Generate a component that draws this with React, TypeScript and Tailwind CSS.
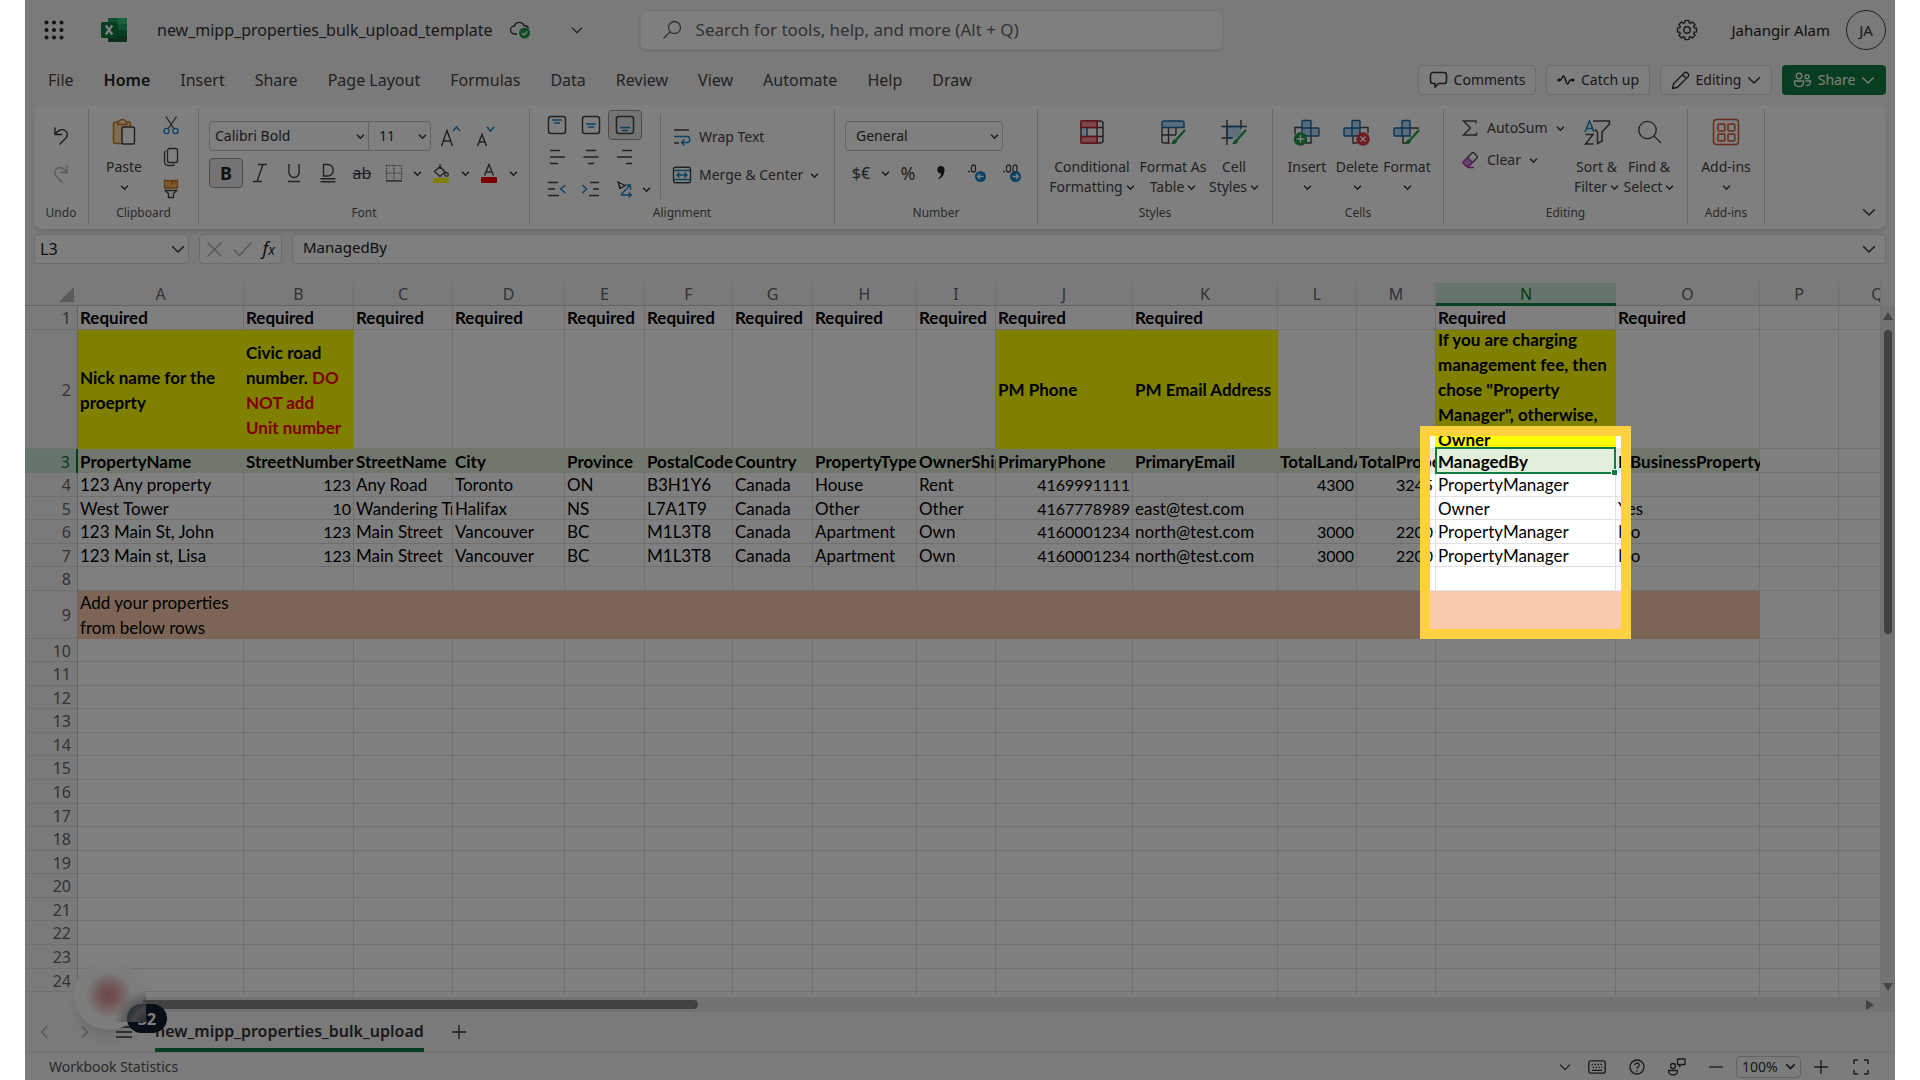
import React from "react";

type Kids = { children?: React.ReactNode };
type SvgProps = Kids & { w?: number; h?: number; box?: string; stroke?: string; sw?: number };

function Svg({ w = 24, h = 24, box, stroke = "#444", sw = 1.3, children }: SvgProps) {
  return (
    <svg width={w} height={h} viewBox={box ?? `0 0 ${w} ${h}`} fill="none" stroke={stroke} strokeWidth={sw} className="shrink-0" aria-hidden="true">
      {children}
    </svg>
  );
}

const BLUE = "#1684c8";
const GREEN = "#219a4b";

const Chev = ({ s = 9 }: { s?: number }) => (
  <Svg w={s} h={s} box="0 0 8 8" stroke="#333" sw={1.3}><path d="M1 2.5 4 5.5 7 2.5" /></Svg>
);
const BigChev = ({ color = "#333", w = 14 }: { color?: string; w?: number }) => (
  <Svg w={w} h={w} box="0 0 14 14" stroke={color} sw={1.4}><path d="M1.2 4.2 7 10 12.8 4.2" /></Svg>
);

/* ---------- icons ---------- */
const Waffle = () => (
  <svg width="20" height="20" viewBox="0 0 20 20" fill="#222" aria-hidden="true">
    {[2.5, 10, 17.5].map((y) => [2.5, 10, 17.5].map((x) => <circle key={`${x}-${y}`} cx={x} cy={y} r="2" />))}
  </svg>
);
const ExcelLogo = () => (
  <svg width="26" height="24" viewBox="0 0 26 24" aria-hidden="true">
    <rect x="7" y="0" width="19" height="24" rx="1.5" fill="#185c37" />
    <path d="M8.500 0H16.500V6H7V1.500A1.500 1.500 0 0 1 8.500 0Z" fill="#21a366" />
    <path d="M16.500 0H24.500A1.500 1.500 0 0 1 26 1.500V6H16.500Z" fill="#33c481" />
    <rect x="16.500" y="6" width="9.500" height="6" fill="#21a366" />
    <rect x="16.500" y="12" width="9.500" height="6" fill="#107c41" />
    <rect x="7" y="6" width="9.500" height="6" fill="#107c41" />
    <rect x="0" y="4" width="16" height="16" rx="1.500" fill="#107c41" />
    <path d="M4.800 7.500 11.200 16.500M11.200 7.500 4.800 16.500" stroke="#fff" strokeWidth="2.200" />
  </svg>
);
const Cloud = () => (
  <Svg w={22} h={22} stroke="#333">
    <path d="M8 15H5.500a4 4 0 0 1 0-8A5 5 0 0 1 15 6.500c2.500 0 4 1.300 4.500 3" />
    <circle cx="15.500" cy="14" r="5.500" fill={GREEN} stroke="none" />
    <path d="m13 14 2 2 3.300-3.600" stroke="#fff" />
  </Svg>
);
const SearchIco = () => (
  <Svg w={20} h={20} stroke="#666"><circle cx="12.500" cy="7.500" r="6" /><path d="M8 12 1.500 18.500" /></Svg>
);
const GEAR_TEETH = Array.from({ length: 8 }, (_, i) => {
  const p = (deg: number, r: number) => {
    const a = ((i * 45 + deg) * Math.PI) / 180;
    return `${(11 + r * Math.cos(a)).toFixed(2)} ${(11 + r * Math.sin(a)).toFixed(2)}`;
  };
  return `${i === 0 ? "M" : "L"}${p(-13, 9.6)}A9.600 9.600 0 0 1 ${p(13, 9.6)}L${p(16, 7.6)}A8 8 0 0 1 ${p(29, 7.6)}`;
}).join("") + "Z";
const Gear = () => (
  <Svg w={22} h={22} stroke="#333" sw={1.4}>
    <circle cx="11" cy="11" r="3.200" />
    <path d={GEAR_TEETH} strokeLinejoin="round" />
  </Svg>
);
const CommentIco = () => (
  <Svg w={19} h={18} stroke="#333" sw={1.5}><path d="M4 1.500h11A2.500 2.500 0 0 1 17.500 4v6a2.500 2.500 0 0 1-2.500 2.500H9.500L6 16.200V12.500H4A2.500 2.500 0 0 1 1.500 10V4A2.500 2.500 0 0 1 4 1.500Z" strokeLinejoin="round" /></Svg>
);
const CatchIco = () => (
  <Svg w={18} h={12} stroke="#222" sw={1.4}><circle cx="2" cy="6" r="1.600" fill="#222" stroke="none" /><circle cx="16" cy="6" r="1.600" fill="#222" stroke="none" /><path d="M2 6h1.500c1.500 0 1.500-4 3-4s2.500 8 4 8 1.500-4 3-4H16" /></Svg>
);
const PencilIco = () => (
  <Svg w={19} h={19} stroke="#333" sw={1.4}><path d="m1.500 17.500 1.200-5L13.200 2a2.300 2.300 0 0 1 3.300 0l.5.500a2.300 2.300 0 0 1 0 3.300L6.500 16.300ZM11.500 3.700l3.800 3.800" strokeLinejoin="round" /></Svg>
);
const ShareIco = () => (
  <Svg w={19} h={16} stroke="#fff" sw={1.3}><circle cx="6" cy="4" r="2.800" /><circle cx="14" cy="4.800" r="2" /><path d="M1.500 9h9v1.500c0 5.500-9 5.500-9 0ZM12.500 9h5v1c0 3-2.500 3.800-4.800 3" /></Svg>
);
const UndoIco = () => (
  <Svg w={18} h={20} stroke="#333" sw={1.4}><path d="M3 1.500v7h7M3.300 8.200C6 4 10 2.500 13 4.500c3 2 3 5.500.5 8L7.500 18.500" /></Svg>
);
const RedoIco = () => (
  <Svg w={18} h={20} stroke="#b0b0b0" sw={1.4}><path d="M15 1.500v7H8M14.700 8.200C12 4 8 2.500 5 4.500c-3 2-3 5.500-.5 8l6 6" /></Svg>
);
const PasteIco = () => (
  <Svg w={24} h={28} stroke="#c67a22" sw={1.5}>
    <path d="M4 4h14v21H1.500V5.500A1.500 1.500 0 0 1 3 4Z" fill="#fbd9a0" stroke="none" />
    <path d="M10 25.500H3A1.500 1.500 0 0 1 1.500 24V5.500A1.500 1.500 0 0 1 3 4h2.500M14.500 4H17a1.500 1.500 0 0 1 1.500 1.500V8M6 6.500h8.500V3.500c-1.500 0-1.500-2-4.200-2S8 3.500 6 3.500Z" />
    <rect x="10" y="9" width="12.500" height="17" rx="1.500" fill="#fff" stroke="#444" />
  </Svg>
);
const CutIco = () => (
  <Svg w={18} h={20}><path d="M4 1.500 12 14M14.500 1.500 6 14" /><circle cx="4.500" cy="16" r="2.600" stroke={BLUE} /><circle cx="13.500" cy="16" r="2.600" stroke={BLUE} /></Svg>
);
const CopyIco = () => (
  <Svg w={16} h={20}><rect x="4.500" y="1.500" width="10" height="14" rx="2" /><path d="M2.500 4C1.500 4.500 1.500 5 1.500 6v8c0 3 1.500 4.500 4 4.500H9c1.500 0 2-.3 2.500-1" /></Svg>
);
const PainterIco = () => (
  <Svg w={16} h={20}><path d="M1.500 1.500h13V9h-13Z" fill="#f8b25a" stroke="#c67a22" /><path d="M9 1.500v4M12 1.500v3" stroke="#c67a22" /><path d="M2 11.500h12l-3.500 3v4h-5v-4Z" strokeLinejoin="round" /></Svg>
);
const GrowA = ({ down }: { down?: boolean }) => (
  <Svg w={22} h={24} sw={1.5}>
    {down ? <path d="M2.500 22 7 10.500 11.500 22M4 18h6" /> : <path d="M1.500 22 7 6.500 12.500 22M3.500 17h7" />}
    <path d={down ? "m12 3 3.500 4L19 3" : "m13 7 3.500-4L20 7"} stroke={BLUE} />
  </Svg>
);
const BorderIco = () => (
  <Svg w={18} h={18} stroke="#555" sw={1.2}><path d="M1.500 1.500h15M1.500 9h15M1.500 1.500V15M9 1.500V15M16.500 1.500V15" strokeDasharray="1.200 1.300" /><path d="M1 16.800h16" stroke="#333" /></Svg>
);
const FillIco = () => (
  <Svg w={18} h={20}><rect x="1" y="15" width="16" height="5" rx="1" fill="#ffff00" stroke="none" /><path d="m8 3.500 5 5.500-5 4.500-5.500-5ZM8 1v5" strokeLinejoin="round" /><circle cx="14.500" cy="11.500" r="1.800" /></Svg>
);
const FontColorIco = () => (
  <Svg w={18} h={20} sw={1.4}><rect x="1" y="14" width="16" height="6" rx="1" fill="#f00" stroke="none" /><path d="M4.500 12.500 9 1.500l4.500 11M6 9h6" /></Svg>
);
const VAlign = ({ y }: { y: number }) => (
  <Svg w={20} h={20} sw={1.5}><rect x="1.500" y="1.500" width="17" height="17" rx="2.500" /><path d={`M5 ${y}h10M7 ${y + 3}h6`} stroke={BLUE} /></Svg>
);
const HAlign = ({ d }: { d: string }) => <Svg w={18} h={16} sw={1.4}><path d={d} /></Svg>;
const Indent = ({ right }: { right?: boolean }) => (
  <Svg w={20} h={16} sw={1.4}>
    <path d={right ? "M9 1.500h9M12 8h6M8 14.500h10" : "M1 1.500h10M1 8h7M1 14.500h11"} />
    <path d={right ? "m1.500 4 4 4-4 4" : "m18.500 4-5 4 5 4"} stroke={BLUE} />
  </Svg>
);
const OrientIco = () => (
  <Svg w={20} h={18} stroke={BLUE}><path d="m3 2 7 3.500-5 3ZM5.500 9 3 2" stroke="#333" /><path d="m6 14.500 9-9M10.500 5h5v5M6 15h10M13.500 12.500 16.500 15l-3 2.500" /></Svg>
);
const WrapIco = () => (
  <Svg w={20} h={18} sw={1.4}><path d="M2 2h15M2 15h5" /><path d="M2 8.500h13.500c3 0 3 6 0 6H10M12.500 11.500 9.500 14.500l3 3" stroke={BLUE} /></Svg>
);
const MergeIco = () => (
  <Svg w={20} h={18} sw={1.4}><rect x="1.500" y="1.200" width="17" height="15.600" rx="2" /><path d="M2 4.500h16M2 13.500h16M5 9h10M7.500 6.500 5 9l2.500 2.500M12.500 6.500 15 9l-2.500 2.500" stroke={BLUE} /></Svg>
);
const DecIco = ({ two }: { two?: boolean }) => (
  <Svg w={20} h={20} sw={1.3}>
    <circle cx="2" cy="8.500" r="1" fill="#444" stroke="none" />
    <rect x="4.500" y="2" width="4" height="7" rx="2" />
    {two && <rect x="11" y="2" width="4" height="7" rx="2" />}
    <circle cx="13.500" cy="13.500" r="5.500" fill={BLUE} stroke="none" />
    <path d={two ? "M10.500 13.500h6M14 11l2.500 2.500L14 16" : "M16.500 13.500h-6M13 11l-2.500 2.500L13 16"} stroke="#fff" />
  </Svg>
);
const CondIco = () => (
  <Svg w={26} h={28} sw={1.5}><rect x="2" y="3" width="22" height="22" rx="2.500" /><path d="M2 9.500h22M2 18.500h22M18 3v22" /><path d="M3 9.500h4v9H3Z" fill="#d6eafc" stroke="none" /><path d="M8 9.500v9" stroke="#1769aa" /><rect x="2" y="3" width="16" height="6.500" fill="#f49191" stroke="#c4262e" /><rect x="2" y="18.500" width="16" height="6.500" fill="#f49191" stroke="#c4262e" /></Svg>
);
const Brush = () => (
  <><path d="M26 12 17 22" stroke={GREEN} strokeWidth="2.200" /><path d="M11.500 26c2.500-.3 1.500-4.500 4.300-4.700 3 0 3 4.700-1 4.700Z" fill={GREEN} stroke="none" /></>
);
const TableIco = () => (
  <Svg w={28} h={28} sw={1.4}><path d="M3 9.500V23a2 2 0 0 0 2 2h6M3 17h14M9.500 9.500V25M17 9.500v7" /><path d="M3 9.500V5a2 2 0 0 1 2-2h18a2 2 0 0 1 2 2v4.500Z" fill="#b5d9f5" stroke="#1769aa" /><Brush /></Svg>
);
const CellIco = () => (
  <Svg w={28} h={28} sw={1.4}><rect x="7" y="8.500" width="14" height="11" fill="#c3e0f8" stroke="none" /><path d="M7 2v25M21 2v8M1.500 8.500H27M1.500 20H13" /><path d="M7 8.500h14V11M7 8.500V20h6" stroke="#1769aa" /><Brush /></Svg>
);
const InsertIco = () => (
  <Svg w={28} h={28} sw={1.4}><path d="M2 16v-6.500h8M18 18v7h-6" /><path d="M10 2.500h7a1 1 0 0 1 1 1v6.500h7a1 1 0 0 1 1 1v6a1 1 0 0 1-1 1H10a1 1 0 0 1-1-1V3.500a1 1 0 0 1 1-1ZM9 10h9v8" fill="#b5d9f5" stroke="#1769aa" /><circle cx="7.500" cy="21" r="6.800" fill={GREEN} stroke="none" /><path d="M7.500 17.300v7.400M3.800 21h7.400" stroke="#fff" /></Svg>
);
const DeleteIco = () => (
  <Svg w={28} h={28} sw={1.4}><path d="M17 9.500h8V15M10 18v7h4" /><path d="M10 2.500h6a1 1 0 0 1 1 1V18H2a1 1 0 0 1-1-1v-6a1 1 0 0 1 1-1h7V3.500a1 1 0 0 1 1-1ZM9 10h8M9 10v8" fill="#b5d9f5" stroke="#1769aa" /><circle cx="20" cy="21" r="6.800" fill="#dc3a41" stroke="none" /><path d="m17.500 18.500 5 5M22.500 18.500l-5 5" stroke="#fff" /></Svg>
);
const FormatIco = () => (
  <Svg w={28} h={28} sw={1.4}><path d="M17 10h9M10 18v7h4" /><path d="M10 2.500h6a1 1 0 0 1 1 1V18H2a1 1 0 0 1-1-1v-6a1 1 0 0 1 1-1h7V3.500a1 1 0 0 1 1-1ZM9 10h8M9 10v8" fill="#b5d9f5" stroke="#1769aa" /><Brush /></Svg>
);
const SigmaIco = () => <Svg w={18} h={18} sw={1.4}><path d="M15 4.500V2H2.500l7 7-7 7H15.500v-2.500" /></Svg>;
const EraserIco = () => (
  <Svg w={18} h={18} sw={1.3}><path d="m6.500 6.500 4.500-4.500a1.500 1.500 0 0 1 2 0l3 3a1.500 1.500 0 0 1 0 2L11.500 11.500" /><path d="m6.500 6.500 5 5-3.500 3.500H5L2 12a1.500 1.500 0 0 1 0-1Z" fill="#d48bdd" stroke="#a22db0" /><path d="M6 16.500h7" stroke="#a22db0" /></Svg>
);
const SortIco = () => (
  <Svg w={28} h={28} sw={1.5}><path d="M2 14 6.500 3 11 14M3.500 10.500h6" stroke={BLUE} /><path d="M2.500 16.500H10L2.500 26H10.500M10 3h16.500v3L19 14v9l-4.500 2.500V14L12 11.500" /></Svg>
);
const FindIco = () => <Svg w={26} h={28}><circle cx="11.500" cy="12" r="8.700" /><path d="m18 18 7 7" /></Svg>;
const AddinIco = () => (
  <Svg w={28} h={28} stroke="#d2562f" sw={1.5}><rect x="1.500" y="1.500" width="25" height="25" rx="3" />{[6, 16].map((x) => [6, 16].map((y) => <rect key={`${x}${y}`} x={x} y={y} width="6.800" height="7" rx="1" />))}</Svg>
);

/* ---------- ribbon parts ---------- */
function IconBtn({ label, className = "w-[34px]", active, children }: Kids & { label: string; className?: string; active?: boolean }) {
  return (
    <button type="button" aria-label={label} className={`flex h-[30px] shrink-0 items-center justify-center rounded ${active ? "border border-[#999] bg-[#e8e8e8]" : ""} ${className}`}>
      {children}
    </button>
  );
}
function Group({ label, className, children }: Kids & { label: string; className: string }) {
  return (
    <section className={`h-[115px] shrink-0 border-r border-[#d1d1d1] ${className}`}>
      <div className="flex h-24">{children}</div>
      <h2 className="text-center text-xs leading-4 text-[#555]">{label}</h2>
    </section>
  );
}
function TallBtn({ icon, line1, line2, className }: { icon: React.ReactNode; line1: string; line2?: string; className: string }) {
  return (
    <button type="button" className={`flex shrink-0 flex-col items-center pt-[9px] text-sm leading-5 whitespace-nowrap text-[#444] ${className}`}>
      {icon}
      <span className="mt-[11px]">{line1}</span>
      <span className="flex h-5 items-center gap-[3px]">{line2}<Chev /></span>
    </button>
  );
}
function Picker({ label, value, className }: { label: string; value: string; className: string }) {
  return (
    <div className={`relative h-full ${className}`}>
      <select aria-label={label} defaultValue={value} className="h-full w-full appearance-none bg-transparent text-sm text-[#333] outline-none">
        <option>{value}</option>
      </select>
      <span className="pointer-events-none absolute top-0 right-[3px] flex h-full items-center"><Chev /></span>
    </div>
  );
}

const menu = ["File", "Home", "Insert", "Share", "Page Layout", "Formulas", "Data", "Review", "View", "Automate", "Help", "Draw"];

function TopBar() {
  return (
    <header>
      <div className="flex h-[60px] items-center pr-[9px] pl-[19px]">
        <button type="button" aria-label="App launcher"><Waffle /></button>
        <span className="ml-[37px]"><ExcelLogo /></span>
        <h1 className="ml-[30px] text-base whitespace-nowrap text-[#333]">new_mipp_properties_bulk_upload_template</h1>
        <button type="button" aria-label="Saved to cloud" className="ml-4"><Cloud /></button>
        <button type="button" aria-label="File details" className="mr-[57px] ml-[40px]"><BigChev w={12} /></button>
        <label className="flex h-10 w-[583px] items-center rounded-md border border-[#ececec] bg-white pl-[21px] shadow-sm">
          <SearchIco />
          <input type="search" aria-label="Search" placeholder="Search for tools, help, and more (Alt + Q)" className="ml-3.5 flex-1 bg-transparent text-[17px] outline-none placeholder:text-[#666]" />
        </label>
        <div className="ml-auto flex items-center">
          <button type="button" aria-label="Settings"><Gear /></button>
          <span className="ml-[33px] text-[15px] text-[#222]">Jahangir Alam</span>
          <button type="button" aria-label="Account" className="ml-4 size-10 rounded-full border border-[#444] text-[15px] text-[#333]">JA</button>
        </div>
      </div>
      <div className="flex h-10 items-center pr-[9px] pl-[23px]">
        <nav className="flex gap-[30px]">
          {menu.map((m) => (
            <button type="button" key={m} className={m === "Home" ? "text-base font-semibold whitespace-nowrap text-[#222]" : "text-base whitespace-nowrap text-[#444]"}>{m}</button>
          ))}
        </nav>
        <div className="ml-auto flex gap-2.5 text-sm text-[#333]">
          <button type="button" className="flex h-[30px] w-[118px] items-center justify-center gap-1.5 rounded border border-[#d6d6d6] bg-[#fcfcfc]"><CommentIco />Comments</button>
          <button type="button" className="flex h-[30px] w-[104px] items-center justify-center gap-1.5 rounded border border-[#d6d6d6] bg-[#fcfcfc]"><CatchIco />Catch up</button>
          <button type="button" className="flex h-[30px] w-[112px] items-center justify-center gap-1.5 rounded border border-[#d6d6d6] bg-[#fcfcfc]"><PencilIco />Editing<BigChev /></button>
          <button type="button" className="flex h-[30px] w-[104px] items-center justify-center gap-1.5 rounded bg-[#107c41] text-white"><ShareIco />Share<BigChev color="#fff" /></button>
        </div>
      </div>
    </header>
  );
}

function Ribbon() {
  return (
    <div className="mx-[9px] mt-[5px] flex h-[124px] overflow-hidden rounded-lg bg-white pt-1 shadow-md">
      <Group label="Undo" className="w-[55px]">
        <div className="flex w-full flex-col items-center pt-2">
          <button type="button" aria-label="Undo" className="flex h-[38px] items-center"><UndoIco /></button>
          <button type="button" aria-label="Redo" className="flex h-[38px] items-center"><RedoIco /></button>
        </div>
      </Group>
      <Group label="Clipboard" className="w-[110px]">
        <TallBtn icon={<PasteIco />} line1="Paste" className="ml-2.5 w-[50px]" />
        <div className="ml-1.5 flex flex-col items-center *:flex *:h-8 *:w-8 *:items-center *:justify-center">
          <button type="button" aria-label="Cut"><CutIco /></button>
          <button type="button" aria-label="Copy"><CopyIco /></button>
          <button type="button" aria-label="Format painter"><PainterIco /></button>
        </div>
      </Group>
      <Group label="Font" className="w-[331px]">
        <div className="flex flex-col gap-[7px] pt-3 pl-2.5">
          <div className="flex">
            <div className="flex h-[30px] w-[222px] rounded border border-[#c8c8c8]">
              <Picker label="Font name" value="Calibri Bold" className="w-[158px] pl-[5px]" />
              <Picker label="Font size" value="11" className="flex-1 border-l border-[#c8c8c8] pl-2.5" />
            </div>
            <IconBtn label="Increase font size" className="ml-0.5 w-[35px]"><GrowA /></IconBtn>
            <IconBtn label="Decrease font size" className="w-[35px]"><GrowA down /></IconBtn>
          </div>
          <div className="flex items-center">
            <IconBtn label="Bold" active><span className="text-lg font-bold text-[#222]">B</span></IconBtn>
            <IconBtn label="Italic"><Svg w={16} h={20} sw={1.4}><path d="M6 1.500h9M1 18.500h9M11 1.500 5 18.500" /></Svg></IconBtn>
            <IconBtn label="Underline"><Svg w={16} h={20} sw={1.4}><path d="M3 1v8.500a5 5 0 0 0 10 0V1M2 18.500h12" /></Svg></IconBtn>
            <IconBtn label="Double underline"><Svg w={16} h={20} sw={1.4}><path d="M3.500 1.500h4c7.500 0 7.500 11.500 0 11.500h-4ZM.5 15.800h15M.5 18.800h15" /></Svg></IconBtn>
            <IconBtn label="Strikethrough"><span className="text-base text-[#444] line-through">ab</span></IconBtn>
            <IconBtn label="Borders" className="w-[30px]"><BorderIco /></IconBtn>
            <IconBtn label="Border options" className="w-4"><Chev /></IconBtn>
            <IconBtn label="Fill color" className="w-8"><FillIco /></IconBtn>
            <IconBtn label="Fill color options" className="w-4"><Chev /></IconBtn>
            <IconBtn label="Font color" className="w-8"><FontColorIco /></IconBtn>
            <IconBtn label="Font color options" className="w-4"><Chev /></IconBtn>
          </div>
        </div>
      </Group>
      <Group label="Alignment" className="w-[305px]">
        <div className="flex w-[130px] flex-col pl-2.5 *:flex *:h-8 *:items-center">
          <div>
            <IconBtn label="Top align"><VAlign y={5} /></IconBtn>
            <IconBtn label="Middle align"><VAlign y={9} /></IconBtn>
            <IconBtn label="Bottom align" active><VAlign y={12.5} /></IconBtn>
          </div>
          <div>
            <IconBtn label="Align left"><HAlign d="M2 1.500h10M2 8h15M2 14.500h8" /></IconBtn>
            <IconBtn label="Center"><HAlign d="M4 1.500h10M1.500 8h15M6 14.500h6" /></IconBtn>
            <IconBtn label="Align right"><HAlign d="M6 1.500h10M1 8h15M10 14.500h6" /></IconBtn>
          </div>
          <div>
            <IconBtn label="Decrease indent"><Indent /></IconBtn>
            <IconBtn label="Increase indent"><Indent right /></IconBtn>
            <IconBtn label="Orientation"><OrientIco /></IconBtn>
            <IconBtn label="Orientation options" className="w-2"><Chev /></IconBtn>
          </div>
        </div>
        <div className="mt-[5px] flex h-[85px] flex-col border-l border-[#d1d1d1] pt-1 pl-[11px] text-sm text-[#444]">
          <button type="button" className="flex h-[38px] items-center gap-[7px]"><WrapIco />Wrap Text</button>
          <button type="button" className="flex h-[38px] items-center gap-[7px] whitespace-nowrap"><MergeIco />Merge &amp; Center<Chev /></button>
        </div>
      </Group>
      <Group label="Number" className="w-[203px]">
        <div className="flex flex-col gap-[7px] pt-3 pl-2.5">
          <div className="h-[30px] w-[158px] rounded border border-[#c8c8c8]">
            <Picker label="Number format" value="General" className="pl-2.5" />
          </div>
          <div className="flex items-center text-[#444]">
            <IconBtn label="Accounting format" className="w-8"><span className="text-base">$€</span></IconBtn>
            <IconBtn label="Accounting options" className="w-4"><Chev /></IconBtn>
            <IconBtn label="Percent style" className="w-[30px]"><span className="text-lg">%</span></IconBtn>
            <IconBtn label="Comma style" className="w-9"><Svg w={10} h={16} stroke="none"><path d="M5 1a3.500 3.500 0 0 1 3.500 4C8.500 9 6.500 12.500 3 14l-.8-.9C4 12 5 10.500 5.200 8.500A3.700 3.700 0 0 1 5 1Z" fill="#222" /></Svg></IconBtn>
            <IconBtn label="Decrease decimal" className="w-[35px]"><DecIco /></IconBtn>
            <IconBtn label="Increase decimal" className="w-[35px]"><DecIco two /></IconBtn>
          </div>
        </div>
      </Group>
      <Group label="Styles" className="w-[235px]">
        <TallBtn icon={<CondIco />} line1="Conditional" line2="Formatting" className="ml-2.5 w-[88px]" />
        <TallBtn icon={<TableIco />} line1="Format As" line2="Table" className="w-[74px]" />
        <TallBtn icon={<CellIco />} line1="Cell" line2="Styles" className="w-[48px]" />
      </Group>
      <Group label="Cells" className="w-[171px]">
        <TallBtn icon={<InsertIco />} line1="Insert" className="ml-[9px] w-[50px]" />
        <TallBtn icon={<DeleteIco />} line1="Delete" className="w-[50px]" />
        <TallBtn icon={<FormatIco />} line1="Format" className="w-[50px]" />
      </Group>
      <Group label="Editing" className="w-[244px]">
        <div className="flex w-[126px] flex-col pt-[3px] pl-[17px] text-sm text-[#444]">
          <button type="button" className="flex h-8 items-center gap-2"><SigmaIco />AutoSum<Chev /></button>
          <button type="button" className="flex h-8 items-center gap-2"><EraserIco />Clear<Chev /></button>
        </div>
        <TallBtn icon={<SortIco />} line1="Sort &" line2="Filter" className="w-[53px]" />
        <TallBtn icon={<FindIco />} line1="Find &" line2="Select" className="w-[52px]" />
      </Group>
      <Group label="Add-ins" className="w-[77px]">
        <TallBtn icon={<AddinIco />} line1="Add-ins" className="w-full" />
      </Group>
      <button type="button" aria-label="Collapse ribbon" className="mr-2.5 mb-2.5 ml-auto self-end"><BigChev /></button>
    </div>
  );
}

function FormulaBar() {
  return (
    <div className="mx-[9px] mt-[5px] flex h-[30px] gap-2.5 *:flex *:items-center *:rounded *:border *:border-[#d9d9d9] *:bg-white">
      <div className="w-[155px] pr-[3px] pl-[5px]">
        <input aria-label="Name box" defaultValue="L3" className="w-full min-w-0 bg-transparent text-base text-[#222] outline-none" />
        <button type="button" aria-label="Name box list"><BigChev /></button>
      </div>
      <div className="w-[83px] justify-between pr-1 pl-1.5">
        <button type="button" aria-label="Cancel"><Svg w={17} h={17} stroke="#aaa" sw={1.3}><path d="m1.500 1.500 14 14M15.500 1.500l-14 14" /></Svg></button>
        <button type="button" aria-label="Enter"><Svg w={21} h={16} stroke="#aaa" sw={1.3}><path d="m1.500 8.500 6 6L19.500 1.500" /></Svg></button>
        <button type="button" aria-label="Insert function" className="pr-0.5 text-lg leading-none text-[#222] italic">f<span className="text-sm">x</span></button>
      </div>
      <div className="flex-1 pr-[9px] pl-2.5">
        <input aria-label="Formula bar" defaultValue="ManagedBy" className="w-full min-w-0 bg-transparent pb-1 text-[15px] text-[#222] outline-none" />
        <button type="button" aria-label="Expand formula bar"><BigChev /></button>
      </div>
    </div>
  );
}

/* ---------- sheet ---------- */
const letters = "ABCDEFGHIJKLMNOPQ".split("");
const colClasses = ["w-[53px]", "w-[166px]", "w-[110px]", "w-[99px]", "w-[112px]", "w-[80px]", "w-[88px]", "w-[80px]", "w-[104px]", "w-[79px]", "w-[137px]", "w-[145px]", "w-[79px]", "w-[79px]", "w-[180px]", "w-[144px]", "w-[79px]", ""];

const data: Record<number, Record<string, React.ReactNode>> = {
  1: Object.fromEntries("ABCDEFGHIJKNO".split("").map((c) => [c, "Required"])),
  2: {
    A: "Nick name for the proeprty",
    B: <>Civic road number. <span className="text-[#f00]">DO NOT add Unit number</span></>,
    J: "PM Phone",
    K: "PM Email Address",
    N: 'If you are charging management fee, then chose "Property Manager", otherwise, Owner',
  },
  3: { A: "PropertyName", B: "StreetNumber", C: "StreetName", D: "City", E: "Province", F: "PostalCode", G: "Country", H: "PropertyType", I: "OwnerShip", J: "PrimaryPhone", K: "PrimaryEmail", L: "TotalLandArea", M: "TotalPropertyArea", N: "ManagedBy", O: "IsBusinessProperty" },
  4: { A: "123 Any property", B: 123, C: "Any Road", D: "Toronto", E: "ON", F: "B3H1Y6", G: "Canada", H: "House", I: "Rent", J: 4169991111, L: 4300, M: 3245, N: "PropertyManager" },
  5: { A: "West Tower", B: 10, C: "Wandering Trail", D: "Halifax", E: "NS", F: "L7A1T9", G: "Canada", H: "Other", I: "Other", J: 4167778989, K: "east@test.com", N: "Owner", O: "Yes" },
  6: { A: "123 Main St, John", B: 123, C: "Main Street", D: "Vancouver", E: "BC", F: "M1L3T8", G: "Canada", H: "Apartment", I: "Own", J: 4160001234, K: "north@test.com", L: 3000, M: 2200, N: "PropertyManager", O: "No" },
  7: { A: "123 Main st, Lisa", B: 123, C: "Main Street", D: "Vancouver", E: "BC", F: "M1L3T8", G: "Canada", H: "Apartment", I: "Own", J: 4160001234, K: "north@test.com", L: 3000, M: 2200, N: "PropertyManager", O: "No" },
  9: { A: "Add your properties from below rows" },
};

const shortRows = [5, 7, 10, 12, 14, 17, 19, 21, 24];
function rowHeight(r: number) {
  if (r === 2) return "h-[119px]";
  if (r === 9) return "h-12";
  return shortRows.includes(r) ? "h-[23px]" : "h-6";
}
function fill(r: number, c: string) {
  if (r === 2 && "ABJKN".includes(c)) return c === "B" ? "bg-[#ffff00] pr-2" : "bg-[#ffff00]";
  if (r === 3 && c <= "O") return "bg-[#e2efda]";
  if (r === 9 && c <= "O") return "bg-[#f8cbad]";
  return "border-r border-b bg-white border-[#e1e1e1]";
}

function Sheet() {
  return (
    <div className="mt-[19px] flex min-h-0 flex-1">
      <div className="min-w-0 flex-1 overflow-hidden">
        <table className="w-full table-fixed border-separate border-spacing-0">
          <colgroup>{colClasses.map((c, i) => <col key={i} className={c} />)}</colgroup>
          <thead>
            <tr>
              <th className="p-0">
                <div className="flex h-[23px] items-center justify-end border-b border-[#c6c6c6] pr-1">
                  <Svg w={15} h={15} stroke="none"><path d="M15 0v15H0Z" fill="#b4b4b4" /></Svg>
                </div>
              </th>
              {letters.map((l) => (
                <th key={l} scope="col" className="p-0 text-base font-normal">
                  <div className={`flex h-[23px] items-center justify-center overflow-hidden ${l === "N" ? "border-b-[3px] border-[#107c41] bg-[#caead8] pt-0.5 text-[#0f703b]" : "border-r border-b border-r-[#e1e1e1] border-b-[#c6c6c6] text-[#666]"} ${l === "Q" ? "pl-9" : ""}`}>{l}</div>
                </th>
              ))}
            </tr>
          </thead>
          <tbody>
            {Array.from({ length: 25 }, (_, i) => i + 1).map((r) => (
              <tr key={r}>
                <th scope="row" className="p-0 text-base font-normal">
                  <div className={`flex items-center justify-end overflow-hidden pt-px pr-1.5 leading-5 ${rowHeight(r)} ${r === 3 ? "border-r-2 border-[#107c41] bg-[#caead8] text-[#0f703b]" : "border-r border-b border-r-[#c6c6c6] border-b-[#e1e1e1] text-[#666]"}`}>{r < 25 ? r : ""}</div>
                </th>
                {letters.map((c) => {
                  const v = data[r]?.[c];
                  return (
                    <td key={c} className="relative p-0">
                      <div className={`flex items-center overflow-hidden pl-0.5 font-[Lato] text-black ${rowHeight(r)} ${fill(r, c)} ${r <= 3 ? "font-bold" : ""} ${r === 2 || r === 9 ? "leading-[25px]" : "pt-px leading-5 whitespace-nowrap"} ${typeof v === "number" ? "justify-end pr-0.5 text-base" : "text-[17px]"}`}>
                        {v !== undefined && <span>{v}</span>}
                      </div>
                      {r === 3 && c === "N" && (
                        <div className="absolute -top-0.5 right-0 -bottom-px -left-px z-10 border-2 border-[#107c41]">
                          <span className="absolute -right-[3px] -bottom-[3px] size-[6px] border-t border-l border-white bg-[#107c41]" />
                        </div>
                      )}
                    </td>
                  );
                })}
              </tr>
            ))}
          </tbody>
        </table>
      </div>
      <div className="mt-[23px] flex w-3.5 flex-col items-center justify-between bg-[#e6e6e6] pt-1.5 pb-1.5">
        <Svg w={10} h={8} stroke="none"><path d="M5 0 10 8H0Z" fill="#888" /></Svg>
        <div className="mt-2.5 mb-auto h-[304px] w-2 rounded-full bg-[#858585]" />
        <Svg w={10} h={8} stroke="none"><path d="M5 8 10 0H0Z" fill="#888" /></Svg>
      </div>
    </div>
  );
}

function Footer() {
  return (
    <footer className="shrink-0">
      <div className="ml-[53px] flex h-[15px] items-center bg-[#e6e6e6] pr-[21px] pl-5">
        <div className="h-[9px] w-[600px] rounded-full bg-[#858585]" />
        <span className="ml-auto"><Svg w={8} h={10} stroke="none"><path d="M0 0 8 5 0 10Z" fill="#858585" /></Svg></span>
      </div>
      <div className="flex h-10 items-center pl-3.5">
        <button type="button" aria-label="Previous sheet"><Svg w={10} h={14} stroke="#aaa"><path d="M8 1.500 2.500 7 8 12.500" /></Svg></button>
        <button type="button" aria-label="Next sheet" className="ml-[31px]"><Svg w={10} h={14} stroke="#aaa"><path d="M2 1.500 7.500 7 2 12.500" /></Svg></button>
        <button type="button" aria-label="All sheets" className="ml-[26px]"><Svg w={16} h={14} stroke="#333" sw={1.4}><path d="M0 2h16M0 7h16M0 12h16" /></Svg></button>
        <button type="button" className="ml-[23px] h-full border-b-4 border-[#107c41] pt-0.5 text-base font-semibold text-[#333]">new_mipp_properties_bulk_upload</button>
        <button type="button" aria-label="New sheet" className="ml-7"><Svg w={14} h={14} stroke="#333"><path d="M7 0v14M0 7h14" /></Svg></button>
      </div>
      <div className="flex h-7 items-center border-t border-[#e4e4e4] bg-[#f8f8f8] pr-[26px] pl-6 text-sm text-[#555]">
        <button type="button">Workbook Statistics</button>
        <div className="ml-auto flex items-center">
          <button type="button" aria-label="More"><BigChev w={12} /></button>
          <button type="button" aria-label="Keyboard" className="ml-[17px]"><Svg w={18} h={14} stroke="#333"><rect x=".8" y=".8" width="16.400" height="12.400" rx="2" /><path d="M3.500 4.500h11M4.500 7.300h10" strokeDasharray="1.500 1.500" /><path d="M4 10.300h10" /></Svg></button>
          <button type="button" aria-label="Help" className="ml-[23px]"><Svg w={16} h={16} stroke="#333"><circle cx="8" cy="8" r="7" /><path d="M5.800 6.300c0-3 4.400-3 4.400-.2C10.200 8 8 8 8 9.800M8 11v1.500" /></Svg></button>
          <button type="button" aria-label="Feedback" className="ml-[22px]"><Svg w={19} h={18} stroke="#333"><circle cx="6" cy="8" r="2.500" /><path d="M1.500 12.500h9c0 6-9 6-9 0ZM10.500 1h7.500v5.500h-3.500L12.500 8.500V6.500h-2Z" strokeLinejoin="round" /></Svg></button>
          <button type="button" aria-label="Zoom out" className="ml-[23px]"><Svg w={14} h={14} stroke="#333"><path d="M0 7h14" /></Svg></button>
          <div className="relative ml-[13px] h-[22px] w-[65px] rounded border border-[#c8c8c8]">
            <select aria-label="Zoom" defaultValue="100%" className="h-full w-full appearance-none bg-transparent pl-[5px] text-sm leading-5 text-[#333] outline-none"><option>100%</option></select>
            <span className="pointer-events-none absolute top-0 right-1 flex h-full items-center"><Chev s={11} /></span>
          </div>
          <button type="button" aria-label="Zoom in" className="ml-[13px]"><Svg w={14} h={14} stroke="#333"><path d="M7 0v14M0 7h14" /></Svg></button>
          <button type="button" aria-label="Full screen" className="ml-[25px]"><Svg w={16} h={16} stroke="#333" sw={1.5}><path d="M1 5V2a1 1 0 0 1 1-1h3M11 1h3a1 1 0 0 1 1 1v3M15 11v3a1 1 0 0 1-1 1h-3M5 15H2a1 1 0 0 1-1-1v-3" /></Svg></button>
        </div>
      </div>
    </footer>
  );
}

function FloatingWidget() {
  return (
    <div className="absolute bottom-[50px] left-[49px] size-[70px] rounded-full bg-[#fafafa] shadow-lg">
      <span className="absolute top-[44px] left-[53px] flex h-[29px] w-10 items-center justify-center rounded-full bg-[#101c30] text-base font-bold text-white">32</span>
      <span className="absolute top-3 left-3 h-[50px] w-[60px] bg-[radial-gradient(circle_at_100%_100%,#50545c_0,#8a8c92_12px,transparent_32px),radial-gradient(circle_at_38%_46%,#d98c8c_0,#e0a5a5_8px,transparent_23px)]" />
    </div>
  );
}

export default function App() {
  return (
    <div className="bg-white font-['Noto_Sans',sans-serif]">
      <main className="relative mx-[25px] flex h-screen flex-col overflow-hidden bg-[#f5f5f5]">
        <TopBar />
        <Ribbon />
        <FormulaBar />
        <Sheet />
        <Footer />
        <FloatingWidget />
        <div className="pointer-events-none absolute top-[426px] left-[1395px] z-20 h-[213px] w-[211px] border-10 border-[#ffd03f] shadow-[0_0_0_3000px_rgba(0,0,0,0.5)]" />
      </main>
    </div>
  );
}
